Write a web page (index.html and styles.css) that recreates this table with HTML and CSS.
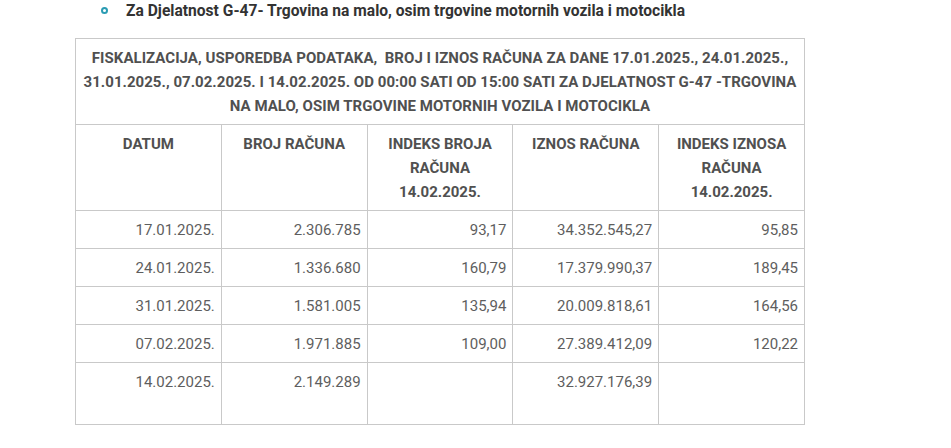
FILE: index.html
```html
<!DOCTYPE html>
<html lang="hr">
<head>
<meta charset="utf-8">
<link rel="stylesheet" href="styles.css">
</head>
<body>
<div class="page">
  <ul class="list">
    <li class="item"><span class="dot"></span><strong>Za Djelatnost G-47- Trgovina na malo, osim trgovine motornih vozila i motocikla</strong></li>
  </ul>
  <table class="data">
    <thead>
      <tr><th colspan="5" class="title">FISKALIZACIJA, USPOREDBA PODATAKA,&nbsp; BROJ I IZNOS RAČUNA ZA DANE 17.01.2025., 24.01.2025., 31.01.2025., 07.02.2025. I 14.02.2025. OD 00:00 SATI OD 15:00 SATI ZA DJELATNOST G-47 -TRGOVINA NA MALO, OSIM TRGOVINE MOTORNIH VOZILA I MOTOCIKLA</th></tr>
      <tr>
        <th>DATUM</th>
        <th>BROJ RAČUNA</th>
        <th>INDEKS BROJA RAČUNA 14.02.2025.</th>
        <th>IZNOS RAČUNA</th>
        <th>INDEKS IZNOSA RAČUNA 14.02.2025.</th>
      </tr>
    </thead>
    <tbody>
      <tr><td>17.01.2025.</td><td>2.306.785</td><td>93,17</td><td>34.352.545,27</td><td>95,85</td></tr>
      <tr><td>24.01.2025.</td><td>1.336.680</td><td>160,79</td><td>17.379.990,37</td><td>189,45</td></tr>
      <tr><td>31.01.2025.</td><td>1.581.005</td><td>135,94</td><td>20.009.818,61</td><td>164,56</td></tr>
      <tr><td>07.02.2025.</td><td>1.971.885</td><td>109,00</td><td>27.389.412,09</td><td>120,22</td></tr>
      <tr class="last"><td>14.02.2025.</td><td>2.149.289</td><td></td><td>32.927.176,39</td><td></td></tr>
    </tbody>
  </table>
</div>
</body>
</html>
```
FILE: styles.css
```css
html, body {
  margin: 0;
  padding: 0;
  background: #fff;
}
body {
  font-family: Roboto, "Liberation Sans", sans-serif;
  color: #555;
}
.page {
  padding: 0 0 0 75px;
}
.list {
  list-style: none;
  margin: 0;
  padding: 0;
}
.item {
  display: flex;
  align-items: center;
  height: 22px;
  font-size: 15.6px;
  color: #333;
  padding-left: 26px;
}
.dot {
  width: 3px;
  height: 3px;
  border: 2px solid #2b9cb3;
  border-radius: 50%;
  margin-right: 18px;
  margin-top: -1px;
}
.item strong {
  font-weight: 700;
}
.data {
  margin-top: 16px;
  border-collapse: collapse;
  width: 730px;
  table-layout: fixed;
  font-size: 15px;
  line-height: 24px;
}
.data th, .data td {
  border: 1px solid #c9c9c9;
  padding: 7px 6px 6px;
  width: 146px;
}
.data th {
  font-weight: 700;
  text-align: center;
  vertical-align: top;
  color: #505050;
}
.data th.title {
  padding: 7px 4px 6px;
  letter-spacing: 0.04px;
}
.data td {
  text-align: right;
  color: #5e5e5e;
  vertical-align: top;
}
.data tr.last td {
  height: 48px;
}
```
